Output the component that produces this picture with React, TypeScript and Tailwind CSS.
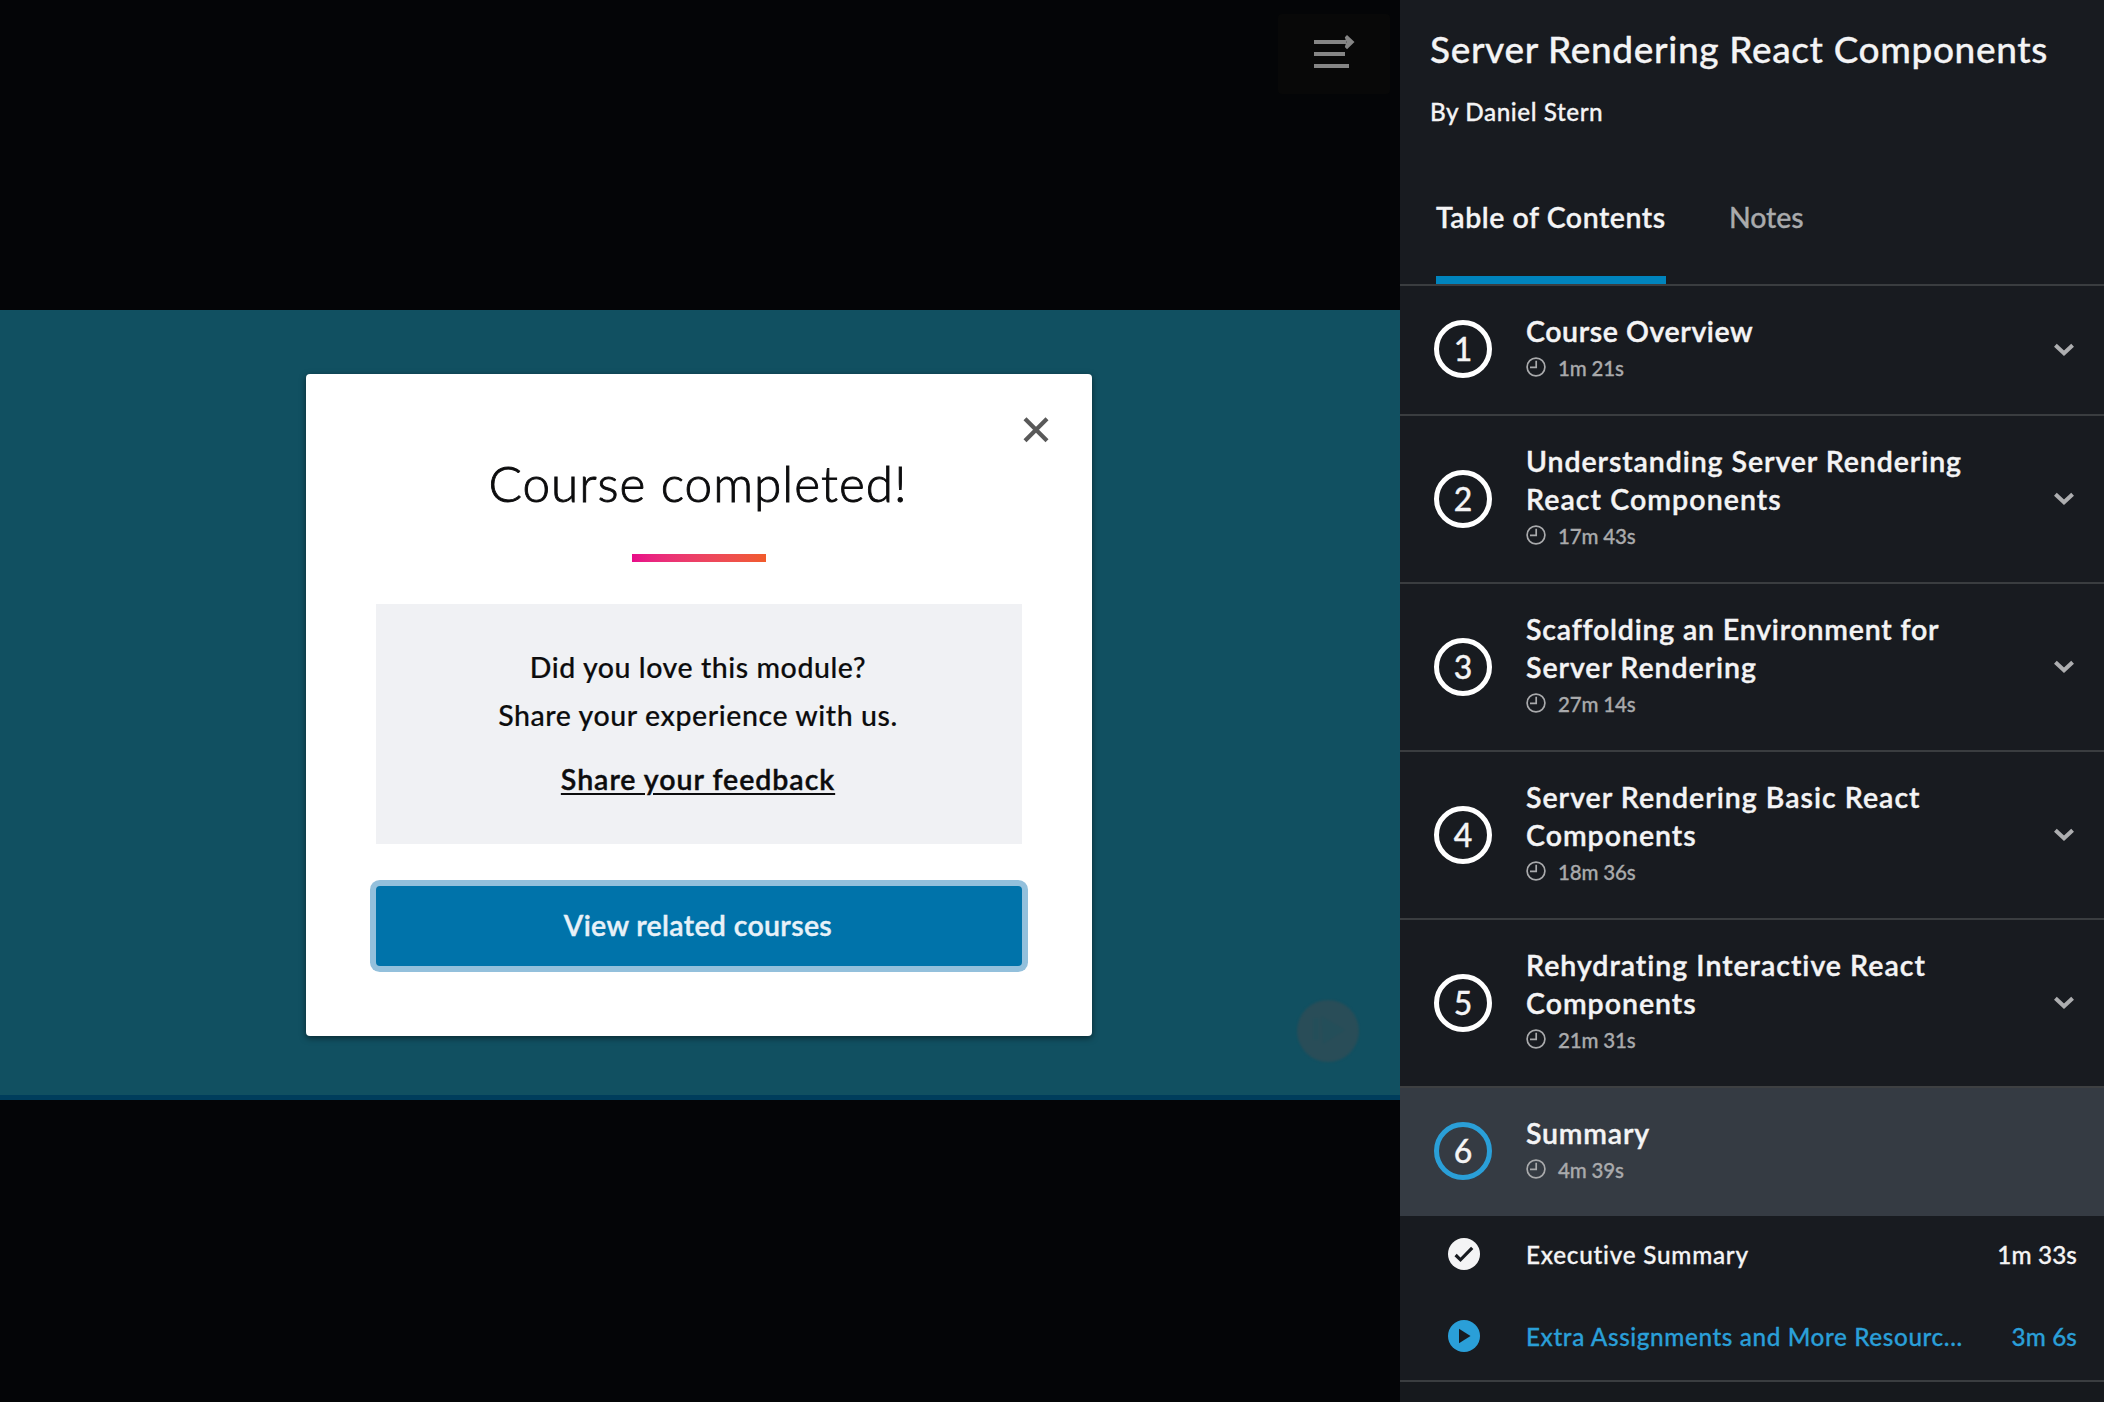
type Module = {
  number: number;
  lines: { text: string; tracking: string }[];
  duration: string;
  active?: boolean;
};

const modules: Module[] = [
  { number: 1, lines: [{ text: "Course Overview", tracking: "tracking-[0.58px]" }], duration: "1m 21s" },
  {
    number: 2,
    lines: [
      { text: "Understanding Server Rendering", tracking: "tracking-[0.92px]" },
      { text: "React Components", tracking: "tracking-[1.08px]" },
    ],
    duration: "17m 43s",
  },
  {
    number: 3,
    lines: [
      { text: "Scaffolding an Environment for", tracking: "tracking-[0.8px]" },
      { text: "Server Rendering", tracking: "tracking-[0.94px]" },
    ],
    duration: "27m 14s",
  },
  {
    number: 4,
    lines: [
      { text: "Server Rendering Basic React", tracking: "tracking-[1px]" },
      { text: "Components", tracking: "tracking-[1px]" },
    ],
    duration: "18m 36s",
  },
  {
    number: 5,
    lines: [
      { text: "Rehydrating Interactive React", tracking: "tracking-[1px]" },
      { text: "Components", tracking: "tracking-[1px]" },
    ],
    duration: "21m 31s",
  },
  { number: 6, lines: [{ text: "Summary", tracking: "tracking-[0.8px]" }], duration: "4m 39s", active: true },
];

function ClockIcon() {
  return (
    <svg className="size-5 shrink-0" viewBox="0 0 20 20" fill="none" stroke="#a9aaac" strokeWidth="1.7">
      <circle cx="10" cy="10" r="8.9" />
      <path d="M10.2 3.8V10.4H4" />
    </svg>
  );
}

function Chevron() {
  return (
    <svg className="h-[14px] w-[22px]" viewBox="0 0 22 14" fill="none" stroke="#adaeb0" strokeWidth="4">
      <path d="M2.4 2.2 11 10.2 19.6 2.2" />
    </svg>
  );
}

function ModuleRow({ module }: { module: Module }) {
  return (
    <div
      className={`flex items-stretch border-t-2 pl-[34px] pr-[29px] ${
        module.active ? "border-[#3e4042] bg-[#353b43]" : "border-[#3a3d40]"
      } ${module.lines.length === 2 ? "h-[168px]" : "h-[130px]"}`}
    >
      <div className="flex w-[92px] shrink-0 items-center">
        <div
          className={`flex size-[58px] items-center justify-center rounded-full border-[5px] pb-px text-[32px] font-medium leading-none [-webkit-text-stroke:0.3px] ${
            module.active ? "border-[#2a9fd8]" : "border-white"
          } ${module.lines.length === 1 ? "-mt-[2px]" : ""}`}
        >
          {module.number}
        </div>
      </div>
      <div className="flex-1 pt-[26px]">
        <h3 className="text-[28.5px] font-semibold leading-[38px] text-[#f4f4f5] [-webkit-text-stroke:0.4px]">
          {module.lines.map((line) => (
            <span key={line.text} className={`block whitespace-nowrap ${line.tracking}`}>
              {line.text}
            </span>
          ))}
        </h3>
        <div className="mt-[3px] flex items-center text-[20.5px] font-medium leading-[30px] text-[#a9aaac] [-webkit-text-stroke:0.3px]">
          <div className="-mt-[3px] flex">
            <ClockIcon />
          </div>
          <span className="ml-[12px] tracking-[-0.15px]">{module.duration}</span>
        </div>
      </div>
      {!module.active && (
        <div className="flex items-center">
          <Chevron />
        </div>
      )}
    </div>
  );
}

function Sidebar() {
  return (
    <aside className="flex h-full w-[704px] flex-col bg-[#181b20] text-[#f4f4f5]">
      <header className="h-[284px] pl-[30px] [-webkit-text-stroke:0.3px]">
        <h1 className="pt-[24px] text-[37px] font-medium leading-[50px] tracking-[0.64px] whitespace-nowrap">
          Server Rendering React Components
        </h1>
        <p className="mt-[22px] text-[24.3px] font-medium leading-[32px] tracking-[0.55px]">By Daniel Stern</p>
        <nav className="mt-[56px] ml-[6px] flex h-[100px] text-[28.5px]">
          <div className="flex h-full w-[230px] flex-col justify-between whitespace-nowrap font-semibold tracking-[0.53px]">
            <span className="leading-[67px]">Table of Contents</span>
            <span className="block h-2 bg-[#0084bd]" />
          </div>
          <span className="ml-[63px] font-medium leading-[67px] tracking-[-0.1px] text-[#a9aaac]">Notes</span>
        </nav>
      </header>
      {modules.map((m) => (
        <ModuleRow key={m.number} module={m} />
      ))}
      <div className="flex h-[82px] items-center pb-[5px] pl-[48px] pr-[27px] text-[24.3px] font-medium [-webkit-text-stroke:0.3px]">
        <svg className="-mt-px size-8" viewBox="0 0 32 32">
          <circle cx="16" cy="16" r="16" fill="#f4f4f5" />
          <path d="M7.6 17 12.5 21.8 24.2 9.8" fill="none" stroke="#181b20" strokeWidth="3.2" />
        </svg>
        <span className="mt-[2px] ml-[46px] flex-1 tracking-[0.75px]">Executive Summary</span>
        <span className="mt-[2px] tracking-[0.1px]">1m 33s</span>
      </div>
      <div className="flex h-[82px] items-center pb-[5px] pl-[48px] pr-[27px] text-[24.3px] font-medium text-[#2a9fd8] [-webkit-text-stroke:0.3px]">
        <svg className="-mt-px size-8" viewBox="0 0 32 32">
          <circle cx="16" cy="16" r="16" fill="#2a9fd8" />
          <path d="M11 8.8 22.5 16 11 23.3Z" fill="#181b20" />
        </svg>
        <span className="mt-[2px] ml-[46px] flex-1 whitespace-nowrap tracking-[0.6px]">
          Extra Assignments and More Resourc...
        </span>
        <span className="mt-[2px] tracking-[0.1px]">3m 6s</span>
      </div>
      <div className="flex-1 border-t-2 border-[#3a3d40] bg-[#16191d]" />
    </aside>
  );
}

function CompletedDialog() {
  return (
    <div className="relative flex h-[662px] w-[786px] flex-col items-center rounded-[4px] bg-white px-[70px] text-[#0c0c0d] shadow-[0_2px_6px_rgba(0,0,0,0.5)]">
      <button className="absolute top-[42px] right-[42px]" aria-label="Close">
        <svg className="size-[28px]" viewBox="0 0 28 28" fill="none" stroke="#595959" strokeWidth="4.2">
          <path d="M3 2.8 25 24.8M25 2.8 3 24.8" />
        </svg>
      </button>
      <h2 className="mt-[79px] mr-[2px] text-[49.5px] font-light leading-[60px] tracking-[1px] [-webkit-text-stroke:0.9px_#0c0c0d]">
        Course completed!
      </h2>
      <div className="mt-[41px] h-2 w-[134px] bg-linear-to-r from-[#e80a89] to-[#f15b2a]" />
      <div className="mt-[42px] flex h-[240px] w-full flex-col items-center bg-[#f0f1f4] pt-[39px] pr-[2px] text-[28.5px] font-medium leading-[48px] [-webkit-text-stroke:0.2px]">
        <p className="tracking-[0.56px]">Did you love this module?</p>
        <p className="tracking-[0.58px]">Share your experience with us.</p>
        <a className="mt-4 font-semibold tracking-[0.97px] underline decoration-2 underline-offset-[3px] [-webkit-text-stroke:0.4px]">
          Share your feedback
        </a>
      </div>
      <button className="mt-[42px] h-[80px] w-full rounded-[4px] bg-[#0073aa] pr-[2px] pb-px text-[28.5px] font-semibold tracking-[0.33px] text-[#e8f1f8] ring-6 ring-[#93c0dc] [-webkit-text-stroke:0.4px]">
        View related courses
      </button>
    </div>
  );
}

export default function App() {
  return (
    <div className="flex h-[1402px] w-[2104px] overflow-hidden bg-[#040507] font-[Lato,sans-serif]">
      <main className="flex w-[1400px] flex-col">
        <div className="flex h-[310px] items-start justify-end pt-[14px] pr-[10px]">
          <button className="flex h-[80px] w-[112px] rounded-[4px] bg-[#080808] pt-[20px] pl-[36px]" aria-label="Toggle contents">
            <svg className="h-[36px] w-[42px]" viewBox="0 0 42 36" fill="#858585">
              <path d="M0 6H32V10H0ZM0 18H31V22H0ZM0 30H35V34H0Z" />
              <path d="M33 1 40.5 8 33 15.2 30.8 13 32.4 8 30.8 3.2Z" />
            </svg>
          </button>
        </div>
        <div className="relative flex h-[790px] justify-center border-b-5 border-[#003d5c] bg-[#115061] pt-[64px] pr-[2px]">
          <CompletedDialog />
          <div className="absolute top-[690px] left-[1297px] flex size-[62px] items-center justify-center rounded-full bg-[#294d58] blur-[1px]">
            <svg className="size-[36px]" viewBox="0 0 36 36" fill="#244e59">
              <path d="M3 5H9V27H3ZM11 3 35 17 13 31Z" />
            </svg>
          </div>
        </div>
      </main>
      <Sidebar />
    </div>
  );
}
